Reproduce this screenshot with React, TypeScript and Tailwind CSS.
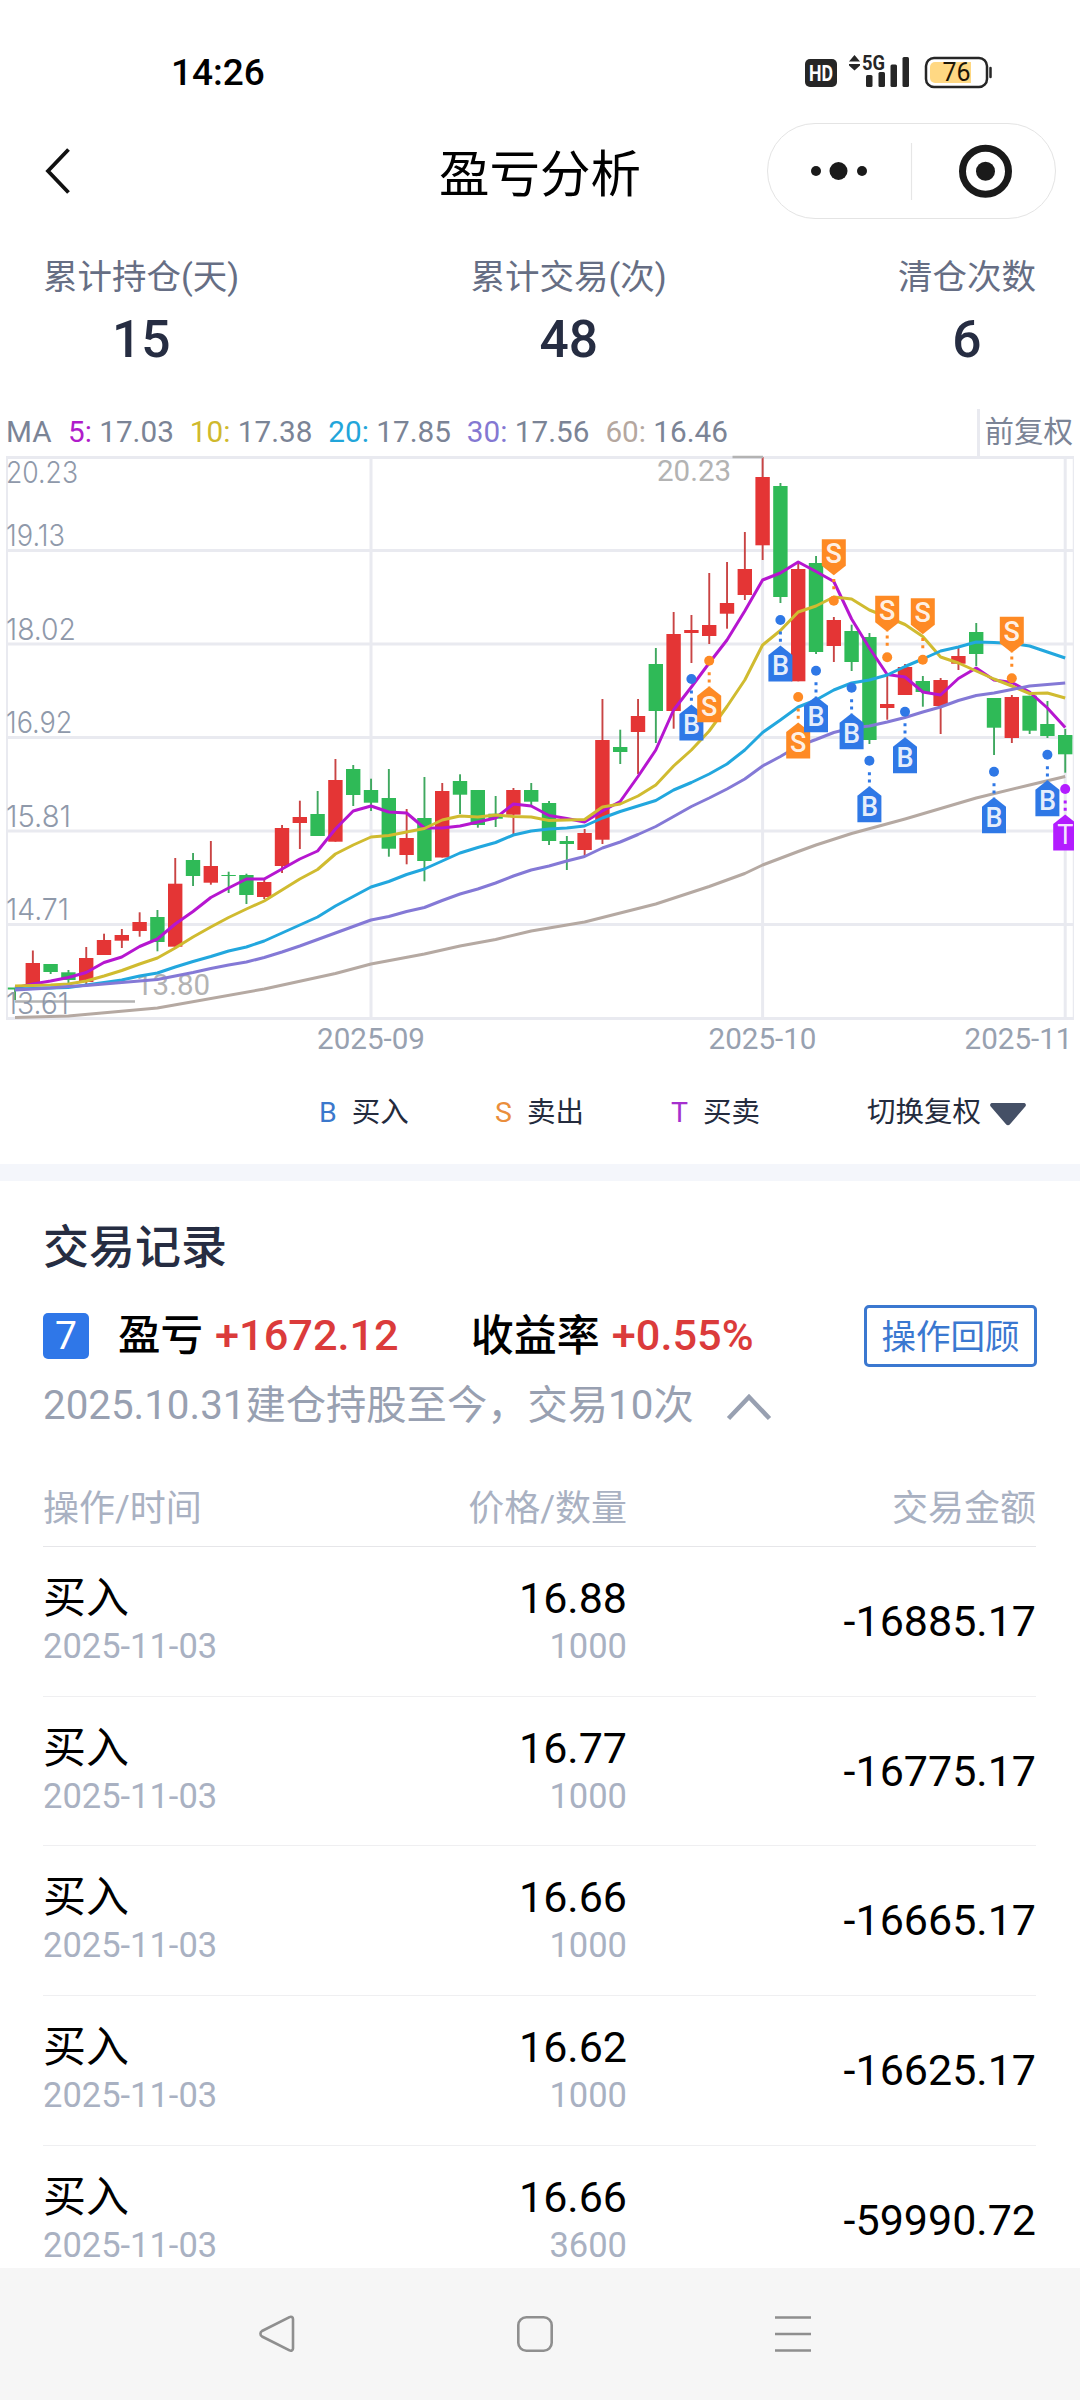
import React from 'react';

type Candle = [up: 0 | 1, high: number, top: number, bottom: number, low: number];

const CANDLES: Candle[] = [
  [0, 988, 987.5, 989.5, 1000], [1, 950.5, 963, 985.5, 986], [0, 964, 964, 972, 974], [0, 970, 972.3, 980, 985],
  [1, 947, 958, 982, 985], [1, 933.7, 940, 955, 955], [1, 929, 935, 940.7, 948], [1, 912.3, 922, 931, 936.7],
  [0, 910, 917, 942, 951.3], [1, 858, 883.7, 946.7, 946.7], [0, 853, 860, 876, 886], [1, 841, 866, 882.7, 884.7],
  [0, 871.7, 875, 876, 893], [0, 873.7, 875, 895, 904], [1, 879, 882, 897, 899], [1, 825, 828, 866, 873],
  [1, 800.7, 817, 823, 849], [0, 791, 814, 836, 836], [1, 759, 780, 841.7, 841.7], [0, 765, 769, 795, 806],
  [0, 778.7, 790, 802.7, 811], [0, 769, 798, 848.7, 856.7], [1, 809, 838, 855, 864.3], [0, 777, 818, 861, 881.3],
  [1, 783, 791, 857.5, 857.5], [0, 774.3, 781, 794.7, 814], [0, 790, 790, 825, 827.7], [0, 796, 813.7, 818.7, 827],
  [1, 788, 790, 814.7, 834], [0, 783, 790, 801.7, 806.7], [0, 801, 803, 841, 845], [0, 836, 841, 844, 870],
  [1, 829, 833, 850, 855.7], [1, 699, 740, 839.7, 844], [0, 729.7, 747, 752, 764], [1, 699, 716, 732, 774],
  [0, 648, 664, 711, 743], [1, 612, 634, 711, 728.7], [1, 615, 630, 633, 663], [1, 573, 625, 636, 644],
  [1, 562, 603, 613.7, 628.7], [1, 532, 569, 595, 600], [1, 457, 477, 545.3, 560], [0, 483, 486, 597, 603],
  [1, 562, 569, 681.3, 681.3], [0, 556, 563, 652, 654], [1, 617, 620, 646, 662], [0, 624.7, 631, 662, 671],
  [0, 633, 637, 740, 744], [1, 675, 704, 708, 719.7], [1, 664, 667, 695, 695], [0, 676, 681, 692, 706.7],
  [1, 678, 680, 706, 734], [1, 648, 656, 663.7, 670], [0, 623, 632, 654, 666], [0, 698, 698, 727.7, 755],
  [1, 695, 697, 738, 743], [0, 695.7, 695.7, 730.7, 734], [0, 701, 724, 736, 738], [0, 729, 735, 754.3, 772.7],
];

const MA5 = [
  988, 984, 981, 977.5, 972.5, 962.5, 957, 946.5, 939, 924, 911.5, 897.5, 888, 879, 879, 869, 859, 851, 829, 811,
  806, 812, 813, 828, 828, 826, 822, 818, 804, 806, 815.5, 818.5, 822, 811, 801.5, 776.5, 750, 710, 687, 663,
  640, 611, 580, 573, 562, 571.5, 581.5, 619, 648, 674.5, 677, 692, 695, 678.5, 668, 680, 682.5, 692, 708, 727.5,
];

const MA10 = [
  986, 985.5, 985, 984, 981, 976, 970.5, 964, 958, 948, 937, 927, 917.5, 909, 901, 890, 879, 869.5, 854, 845,
  837, 835.5, 832, 828.5, 820, 816, 817, 815, 816.5, 817, 820.5, 820, 819.5, 807, 804, 796, 785, 766, 750, 731,
  706.5, 680, 645, 630.5, 612, 606, 597, 599, 610, 617, 624.5, 636.5, 657, 663, 671, 679, 686, 693.5, 693, 698,
];

const MA20 = [
  989, 988.5, 988, 987.5, 985, 982.5, 980, 976, 973, 967, 961.5, 956.5, 951, 947, 941, 933, 925, 917, 906, 896.5,
  887, 881.5, 874.5, 869, 861, 853, 847.5, 842.5, 835, 831, 829, 828, 826, 818, 811.5, 806, 800.5, 790, 782.5, 774,
  764, 750, 732.5, 720, 707, 700, 690, 683, 680, 675, 666.5, 659, 651, 647, 642, 642.5, 643.5, 646, 652, 658,
];

const MA30 = [
  990, 989, 988, 986.5, 985.5, 984, 982.5, 981, 979.5, 976, 972.5, 968.5, 965, 962, 957.5, 952, 946, 939.5, 933, 926.5,
  920, 916.5, 911.5, 907.5, 900.5, 894, 889, 883, 876, 870, 866, 861, 856.5, 848, 842, 834.5, 826.5, 816.5, 806.5, 798,
  789, 779, 766, 756.5, 746, 739.5, 732.5, 728, 726, 722, 717.5, 712, 707, 700.5, 695.5, 693, 689.5, 686, 684.5, 683,
];

// sparse [index, y] points, this line is nearly straight
const MA60: [number, number][] = [
  [0, 1017.5], [3, 1016], [8, 1008], [14, 989], [18, 973.5], [20, 964], [23, 954], [25, 946], [27, 939.5], [29, 931],
  [30, 928], [32, 922], [36, 904], [39, 886.5], [41, 873.5], [42, 865], [44, 851.5], [45, 845], [47, 833.5],
  [50, 819], [54, 798], [57, 785], [59, 776.5],
];

const MARKERS: { i: number; y: number; type: 'B' | 'S' | 'T'; above?: boolean }[] = [
  { i: 38, y: 679, type: 'B' },
  { i: 39, y: 660.7, type: 'S' },
  { i: 43, y: 620, type: 'B' },
  { i: 44, y: 697, type: 'S' },
  { i: 45, y: 670.7, type: 'B' },
  { i: 46, y: 600.7, type: 'S', above: true },
  { i: 47, y: 687.7, type: 'B' },
  { i: 48, y: 760.7, type: 'B' },
  { i: 49, y: 657.3, type: 'S', above: true },
  { i: 50, y: 711.7, type: 'B' },
  { i: 51, y: 659.7, type: 'S', above: true },
  { i: 55, y: 771.7, type: 'B' },
  { i: 56, y: 678.3, type: 'S', above: true },
  { i: 58, y: 754.7, type: 'B' },
  { i: 59, y: 789, type: 'T' },
];

const MARKER_COLOR = { B: '#2f78e6', S: '#fe8a24', T: '#b31cff' };

const AXIS = [
  { label: '20.23', y: 482.5, w: 72 },
  { label: '19.13', y: 545.5, w: 59 },
  { label: '18.02', y: 639.7, w: 70 },
  { label: '16.92', y: 733, w: 66.5 },
  { label: '15.81', y: 826.7, w: 65 },
  { label: '14.71', y: 919.5, w: 63 },
  { label: '13.61', y: 1013.5, w: 63 },
];

const MA_LEGEND = [
  { name: '5:', value: '17.03', color: 'text-[#b01ccb]' },
  { name: '10:', value: '17.38', color: 'text-[#d0b92c]' },
  { name: '20:', value: '17.85', color: 'text-[#22a5da]' },
  { name: '30:', value: '17.56', color: 'text-[#8478d2]' },
  { name: '60:', value: '16.46', color: 'text-[#b5a79f]' },
];

const STATS = [
  { label: '累计持仓(天)', value: '15' },
  { label: '累计交易(次)', value: '48' },
  { label: '清仓次数', value: '6' },
];

const TRADES = [
  { price: '16.88', count: '1000', amount: '-16885.17' },
  { price: '16.77', count: '1000', amount: '-16775.17' },
  { price: '16.66', count: '1000', amount: '-16665.17' },
  { price: '16.62', count: '1000', amount: '-16625.17' },
  { price: '16.66', count: '3600', amount: '-59990.72' },
];

const GRID = [457.5, 550.5, 644, 737.5, 831, 924.5, 1018.5];

const cx = (i: number) => 15 + i * 17.8;
const toPoints = (ys: number[]) => ys.map((y, i) => `${cx(i)},${y}`).join(' ');

const StatusBar = () => (
  <div className="flex h-[123px] items-center justify-between pt-[22px] pr-[84px] pl-[171px]">
    <span className="text-[37px] leading-none font-medium text-black">14:26</span>
    <svg width="192" height="52" viewBox="804 47 192 52">
      <rect x="805" y="59" width="32" height="28" rx="5" fill="#262626" />
      <text x="821" y="81" textAnchor="middle" fontSize="22" fontWeight="700" fill="#fff" textLength="24" lengthAdjust="spacingAndGlyphs">HD</text>
      <path d="M849 61.5l5.500-6.500 5.500 6.500zM849 64h11v1.500l-5.500 5-5.500-5z" fill="#262626" />
      <text x="862" y="70" fontSize="21" fontWeight="700" fill="#262626" textLength="23" lengthAdjust="spacingAndGlyphs">5G</text>
      <g fill="#262626">
        <rect x="866" y="75" width="6.500" height="12" rx="1.500" />
        <rect x="878.500" y="72" width="6.500" height="15" rx="1.500" />
        <rect x="890.500" y="64.500" width="6.500" height="22.500" rx="1.500" />
        <rect x="902.500" y="57" width="6.500" height="30" rx="1.500" />
      </g>
      <rect x="926" y="58" width="61" height="29" rx="8" fill="#fff" stroke="#262626" strokeWidth="2.500" />
      <path d="M935 62h36v21h-36a5 5 0 0 1-5-5v-11a5 5 0 0 1 5-5z" fill="#ffd883" />
      <path d="M990.500 68v9" stroke="#262626" strokeWidth="2.500" strokeLinecap="round" />
      <text x="956.500" y="81" textAnchor="middle" fontSize="25" fill="#1c1608" textLength="28" lengthAdjust="spacingAndGlyphs">76</text>
    </svg>
  </div>
);

const NavHeader = () => (
  <div className="flex h-24 items-center">
    <div className="w-[313px] pl-[43px]">
      <svg width="30" height="50" viewBox="0 0 30 50" fill="none" stroke="#111" strokeWidth="3.8">
        <path d="M25.500 3.500L5 25l20.500 21.500" />
      </svg>
    </div>
    <h1 className="flex-1 pt-[8px] text-center text-[50.500px] leading-none text-black">盈亏分析</h1>
    <div className="mr-6 flex h-24 w-[289px] items-center justify-center rounded-full border border-[#e4e4e4]">
      <svg width="202" height="60" viewBox="811 141 202 60" fill="#1a1a1a">
        <circle cx="816" cy="171" r="5" />
        <circle cx="838.500" cy="171" r="9" />
        <circle cx="862" cy="171" r="5" />
        <path d="M911.500 143v57" stroke="#e6e6e6" strokeWidth="1.200" />
        <circle cx="985.500" cy="171.300" r="23" fill="none" stroke="#1a1a1a" strokeWidth="7" />
        <circle cx="985.500" cy="171.300" r="9.500" />
      </svg>
    </div>
  </div>
);

const StatsRow = () => (
  <div className="flex h-[190px] justify-between pt-9 pr-[44px] pl-[43px]">
    {STATS.map((s) => (
      <div key={s.label} className="flex flex-col items-center">
        <span className="text-[34.500px] leading-[44px] text-[#666e84]">{s.label}</span>
        <span className="mt-[11px] text-[51.500px] leading-[60px] font-medium text-[#262d42]">{s.value}</span>
      </div>
    ))}
  </div>
);

const Marker = ({ i, y, type, above }: (typeof MARKERS)[number]) => {
  const x = cx(i);
  const dir = above ? -1 : 1;
  const color = MARKER_COLOR[type];
  return (
    <g>
      <circle cx={x} cy={y} r="5" fill={color} />
      <path d={`M${x} ${y + dir * 11.5}V${y + dir * 26}`} stroke={color} strokeWidth="3" strokeDasharray="3 4.200" />
      <path
        d={`M${x} ${y + dir * 25.5}l12 ${dir * 9.5}v${dir * 26.500}h-24v${dir * -26.500}z`}
        fill={color}
      />
      <text x={x} y={y + dir * 45.500 + (above ? 8 : 9.500)} textAnchor="middle" fontSize={27} fontWeight={type === 'T' ? 400 : 500} fill="#fff" fillOpacity="0.9">
        {type}
      </text>
    </g>
  );
};

const KLineChart = () => (
  <svg className="block" width="1080" height="610" viewBox="0 450 1080 610">
    <defs>
      <clipPath id="plot">
        <rect x="0" y="450" width="1074" height="610" />
      </clipPath>
    </defs>
    <g clipPath="url(#plot)">
      <g stroke="#e9eaf0" strokeWidth="3">
        {GRID.map((y) => (
          <path key={y} d={`M6 ${y}H1074`} />
        ))}
        <path d="M7 457V1020" strokeWidth="2" />
        <path d="M1073.500 457V1020" strokeWidth="1.500" />
        <path d="M978.500 450V457" />
        {[20, 42, 59].map((i) => (
          <path key={i} d={`M${cx(i)} 457V1018`} />
        ))}
      </g>

      {CANDLES.map(([up, high, top, bottom, low], i) => (
        <g key={i} fill={up ? '#e43535' : '#2fba57'}>
          <rect x={cx(i) - 0.9} y={high} width="1.900" height={low - high} fill={up ? '#c94444' : '#3fa85f'} />
          <rect x={cx(i) - 7.2} y={top} width="14.400" height={bottom - top} />
        </g>
      ))}

      <g fontSize="29.500" fill="#b3b3b3">
        <text x="657" y="480.700">20.23</text>
        <path d="M732.500 457H763M15 1001.500H135" stroke="#b3b3b3" strokeWidth="2.700" />
        <text x="136" y="994.500">13.80</text>
      </g>

      <g fill="none" strokeWidth="3" strokeLinejoin="round">
        <polyline points={toPoints(MA5)} stroke="#b616d0" />
        <polyline points={toPoints(MA10)} stroke="#d0bb30" />
        <polyline points={toPoints(MA20)} stroke="#22a7de" />
        <polyline points={toPoints(MA30)} stroke="#8479d6" />
        <polyline points={MA60.map(([i, y]) => `${cx(i)},${y}`).join(' ')} stroke="#b5a9a2" />
      </g>

      {MARKERS.map((m) => (
        <Marker key={m.i} {...m} />
      ))}

      <g fontSize="30" fontWeight="300" fill="#8f99aa" className="font-['Inter']">
        {AXIS.map((a) => (
          <text key={a.label} x="6" y={a.y} textLength={a.w} lengthAdjust="spacingAndGlyphs">
            {a.label}
          </text>
        ))}
      </g>
      <g fontSize="29.600" fill="#98a1b0" textAnchor="middle">
        <text x="371" y="1048.700">2025-09</text>
        <text x="762.500" y="1048.700">2025-10</text>
        <text x="1018.500" y="1048.700">2025-11</text>
      </g>
    </g>
  </svg>
);

const ChartLegend = () => (
  <div className="flex h-[104px] items-center pt-[3px] pl-[319px] text-[28.500px] leading-none text-[#242b3d]">
    <div className="flex w-44 gap-[15px]">
      <span className="text-[#3b78cc]">B</span>买入
    </div>
    <div className="flex w-44 gap-[15px]">
      <span className="text-[#ea8e3c]">S</span>卖出
    </div>
    <div className="flex w-[196px] gap-[15px]">
      <span className="text-[#a52fce]">T</span>买卖
    </div>
    <div className="flex items-center gap-2">
      切换复权
      <svg width="38" height="24" viewBox="0 0 38 24">
        <path d="M3 1h32a2 2 0 0 1 1.500 3.200L21 22.300a2.600 2.600 0 0 1-4 0L1.500 4.200A2 2 0 0 1 3 1z" fill="#455066" />
      </svg>
    </div>
  </div>
);

const TradeRecords = () => (
  <div className="h-[1087px] overflow-hidden pr-[44px] pl-[43px]">
    <h2 className="flex h-[124px] items-center pt-[8px] text-[46px] leading-none font-medium text-[#262d42]">交易记录</h2>

    <div className="flex h-[62px] items-center leading-none font-medium text-black">
      <span className="flex size-[46px] items-center justify-center rounded-[5px] bg-[#2f77e8] text-[39px] font-normal text-white">7</span>
      <span className="ml-[29px] text-[42.500px]">盈亏</span>
      <span className="ml-3 text-[43.300px] text-[#db3b3b]">+1672.12</span>
      <span className="ml-[72px] text-[43px]">收益率</span>
      <span className="ml-3 text-[43.300px] text-[#db3b3b]">+0.55%</span>
      <button className="-mr-px ml-auto h-[62px] w-[173px] rounded-[5px] border-3 border-[#3b78d0] pt-0.5 text-[34.500px] leading-none font-normal text-[#3b78d0]">
        操作回顾
      </button>
    </div>

    <div className="flex h-[76px] items-center pt-[3px] text-[40.300px] leading-none text-[#98a0b1]">
      2025.10.31建仓持股至今，交易10次
      <svg className="ml-8" width="46" height="28" viewBox="0 0 46 28" fill="none" stroke="#98a0b1" strokeWidth="4.500">
        <path d="M2.500 25.500L23 4l20.500 21.500" />
      </svg>
    </div>

    <div className="mt-[24px] flex h-[80px] items-center border-b border-[#e6e6e9] pt-[5px] text-[36px] leading-none text-[#a9b1c2]">
      <span className="flex-1">操作/时间</span>
      <span className="w-[200px] text-right">价格/数量</span>
      <span className="w-[409px] text-right">交易金额</span>
    </div>

    {TRADES.map((t, idx) => (
      <div key={idx} className="flex h-[149.700px] border-b border-[#efeff1] pt-[26px] text-black">
        <div className="flex-1">
          <div className="text-[43px] leading-[50px]">买入</div>
          <div className="text-[34.500px] leading-[46px] text-[#a9b1c2]">2025-11-03</div>
        </div>
        <div className="w-[200px] text-right">
          <div className="text-[43px] leading-[50px]">{t.price}</div>
          <div className="text-[34.500px] leading-[46px] text-[#a9b1c2]">{t.count}</div>
        </div>
        <div className="w-[409px] pt-[23px] text-right text-[43px] leading-[50px]">{t.amount}</div>
      </div>
    ))}
  </div>
);

const SystemNav = () => (
  <div className="h-[132px] bg-[#f6f6f6] pt-[46px] pl-[257px]">
    <svg width="556" height="40" viewBox="257 2314 556 40" fill="none" stroke="#8f8f8f" strokeWidth="2.600">
      <path d="M293 2319v29.500a2.200 2.200 0 0 1-3.500 1.800L262 2336.500a3.200 3.200 0 0 1 0-5.500l27.500-13.800a2.200 2.200 0 0 1 3.500 1.800z" />
      <rect x="518.300" y="2317.300" width="33.400" height="33.400" rx="8" />
      <path d="M775 2317.500h36M775 2334h36M775 2350.500h36" />
    </svg>
  </div>
);

export default function App() {
  return (
    <div className="h-[2400px] w-[1080px] overflow-hidden bg-white font-['Roboto','Noto_Sans_CJK_SC',sans-serif]">
      <StatusBar />
      <NavHeader />
      <StatsRow />

      <div className="flex h-[41px] items-center pl-[6px] text-[29.700px] leading-none text-[#7b8496]">
        <span className="w-[62px] pt-1">MA</span>
        <div className="flex flex-1 gap-4 pt-1">
          {MA_LEGEND.map((m) => (
            <span key={m.name}>
              <span className={m.color}>{m.name}</span> {m.value}
            </span>
          ))}
        </div>
        <span className="mr-[7px] flex h-full items-center border-l-3 border-[#e9eaf0] pt-[6px] pl-1 text-[29.500px]">前复权</span>
      </div>
      <KLineChart />
      <ChartLegend />
      <div className="h-[17px] bg-[#f4f6fb]" />
      <TradeRecords />
      <SystemNav />
    </div>
  );
}
